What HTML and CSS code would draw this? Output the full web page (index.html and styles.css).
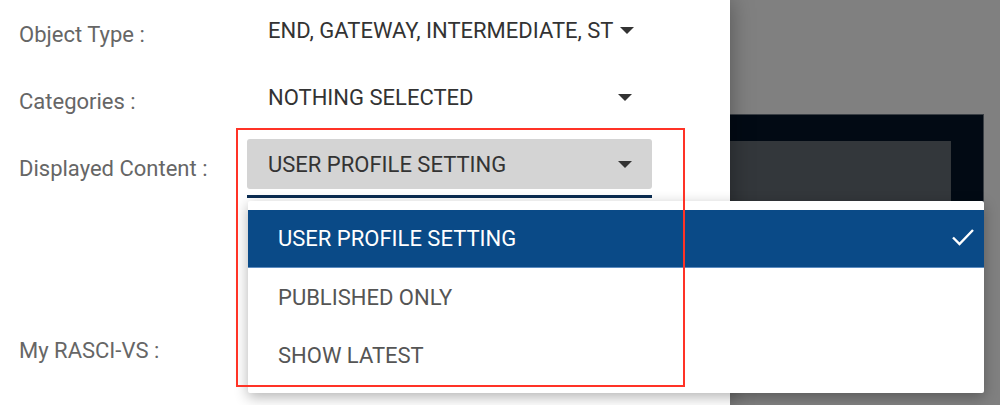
FILE: index.html
```html
<!DOCTYPE html>
<html lang="en">
  <head>
    <meta charset="UTF-8" />
    <meta name="viewport" content="width=device-width, initial-scale=1.0" />
    <title>Filter settings</title>
    <link rel="stylesheet" href="styles.css">
  </head>
  <body>
    <div class="panel">
      <div class="row">
        <span class="label">Object Type :</span>
        <div class="select">
          <span class="select-text">END, GATEWAY, INTERMEDIATE, ST</span>
          <span class="caret"></span>
        </div>
      </div>
      <div class="row">
        <span class="label">Categories :</span>
        <div class="select">
          <span class="select-text">NOTHING SELECTED</span>
          <span class="caret"></span>
        </div>
      </div>
      <div class="row">
        <span class="label">Displayed Content :</span>
        <div class="select open">
          <span class="select-text">USER PROFILE SETTING</span>
          <span class="caret"></span>
        </div>
      </div>
      <div class="focus-bar"></div>
      <div class="row row-last">
        <span class="label">My RASCI-VS :</span>
        <div class="select"></div>
      </div>
    </div>

    <div class="backdrop">
      <div class="dark-card">
        <div class="dark-inner"></div>
      </div>
    </div>

    <ul class="menu">
      <li class="menu-item selected">
        <span>USER PROFILE SETTING</span>
        <svg class="check" width="24" height="18" viewBox="0 0 24 18">
          <path d="M2 9.5 L8.5 16 L22 2" fill="none" stroke="#fff" stroke-width="2.4" />
        </svg>
      </li>
      <li class="menu-item">PUBLISHED ONLY</li>
      <li class="menu-item">SHOW LATEST</li>
    </ul>

    <div class="highlight"></div>
  </body>
</html>
```

FILE: styles.css
```css
body {
  font-family: Roboto, "Liberation Sans", sans-serif;
  margin: 0;
  padding: 0;
  display: flex;
  height: 405px;
  overflow: hidden;
  background-color: #808080;
}
.panel {
  width: 730px;
  background: #ffffff;
  padding: 5px 0 0 19px;
  box-sizing: border-box;
  position: relative;
  z-index: 1;
  box-shadow: 0 0 22px rgba(0, 0, 0, 0.35);
}
.row {
  display: flex;
  align-items: center;
  height: 50px;
  margin-bottom: 17px;
}
.row-last {
  margin-top: 123px;
}
.label {
  width: 228px;
  padding-top: 8px;
  font-size: 22px;
  color: #666666;
}
.select {
  width: 405px;
  height: 50px;
  box-sizing: border-box;
  padding: 0 20px 0 21px;
  display: flex;
  align-items: center;
  border-radius: 3px;
  font-size: 22px;
  color: #333333;
}
.select.open {
  background-color: #d4d4d4;
}
.select-text {
  flex: 1;
  white-space: nowrap;
  margin-right: 6px;
}
.caret {
  width: 0;
  height: 0;
  border-left: 7px solid transparent;
  border-right: 7px solid transparent;
  border-top: 7px solid #333333;
}
.focus-bar {
  width: 405px;
  height: 3px;
  margin: -11px 0 0 228px;
  background-color: #0b2d52;
}

.backdrop {
  flex: 1;
  padding-top: 114px;
}
.dark-card {
  height: 110px;
  margin-right: 16px;
  padding-top: 26px;
  padding-right: 32px;
  box-sizing: border-box;
  background-color: #020a14;
  border-right: 1px solid #3a3f45;
  border-top: 1px solid #3a3f45;
}
.dark-inner {
  height: 84px;
  background-color: #33373b;
}

.menu {
  position: absolute;
  left: 248px;
  top: 201px;
  width: 736px;
  margin: 0;
  padding: 9px 0;
  list-style: none;
  background: #ffffff;
  border-radius: 2px;
  box-shadow: 0 4px 14px rgba(0, 0, 0, 0.3);
  z-index: 2;
}
.menu-item {
  height: 58px;
  box-sizing: border-box;
  padding: 0 9px 0 30px;
  display: flex;
  align-items: center;
  justify-content: space-between;
  font-size: 22px;
  color: #555555;
}
.menu-item.selected {
  background-color: #0a4a87;
  border-bottom: 1px solid #5d8cc0;
  color: #ffffff;
}
.check {
  margin-top: -4px;
}

.highlight {
  position: absolute;
  left: 236px;
  top: 128px;
  width: 445px;
  height: 255px;
  border: 2px solid #ff3326;
  z-index: 3;
}
```
